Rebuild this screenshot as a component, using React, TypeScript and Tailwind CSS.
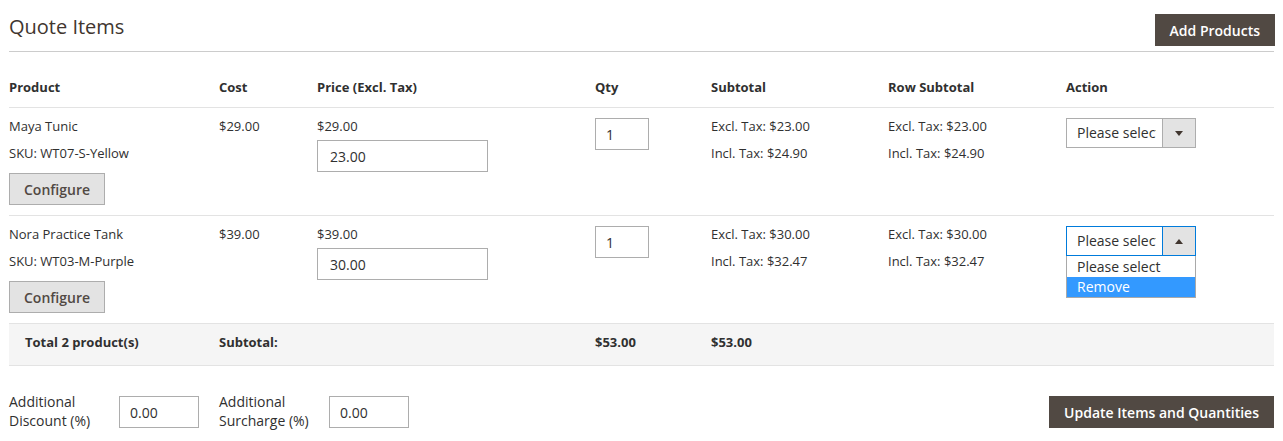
import React from 'react';

type Item = {
  name: string;
  sku: string;
  cost: string;
  price: string;
  customPrice: string;
  excl: string;
  incl: string;
  open?: boolean;
};

const items: Item[] = [
  { name: 'Maya Tunic', sku: 'WT07-S-Yellow', cost: '$29.00', price: '$29.00', customPrice: '23.00', excl: '$23.00', incl: '$24.90' },
  { name: 'Nora Practice Tank', sku: 'WT03-M-Purple', cost: '$39.00', price: '$39.00', customPrice: '30.00', excl: '$30.00', incl: '$32.47', open: true },
];

const cols = 'grid grid-cols-[210px_98px_278px_116px_177px_178px_208px]';

const ActionSelect: React.FC<{ open?: boolean }> = ({ open }) => (
  <div className="relative mt-[1px] w-[130px]">
    <div
      className={`flex h-[30px] border bg-white ${open ? 'border-[#007bdb]' : 'border-[#adadad]'}`}
    >
      <span className="mr-[6px] flex-1 overflow-hidden whitespace-nowrap pl-[10px] text-[14px] leading-[28px]">Please select</span>
      <span
        className={`flex w-[33px] items-center justify-center border-l bg-[#e3e3e3] ${open ? 'border-[#007bdb]' : 'border-[#adadad]'}`}
      >
        <svg width="8" height="5" viewBox="0 0 8 5">
          {open ? <path d="M0 5 L4 0 L8 5 Z" fill="#41362f" /> : <path d="M0 0 L8 0 L4 5 Z" fill="#41362f" />}
        </svg>
      </span>
    </div>
    {open && (
      <div className="absolute left-0 top-[30px] z-10 w-[130px] border border-t-0 border-[#a9a9a9] bg-white text-[14px] leading-[20px]">
        <div className="pl-[10px] pt-[1px]">Please select</div>
        <div className="bg-[#3399ff] pl-[10px] text-white">Remove</div>
      </div>
    )}
  </div>
);

const Row: React.FC<{ item: Item }> = ({ item }) => (
  <div className={`${cols} border-b border-[#e3e3e3] pt-[9px] pb-[10px]`}>
    <div>
      <div className="leading-[18px]">{item.name}</div>
      <div className="mt-[9px] leading-[18px]">SKU: {item.sku}</div>
      <button className="mt-[11px] h-[32px] w-[96px] border border-[#adadad] bg-[#e3e3e3] text-[14px] font-semibold text-[#514943]">
        Configure
      </button>
    </div>
    <div className="leading-[18px]">{item.cost}</div>
    <div>
      <div className="leading-[18px]">{item.price}</div>
      <input
        readOnly
        value={item.customPrice}
        className="mt-[5px] h-[32px] w-[171px] border border-[#adadad] px-[12px] text-[14px] outline-none"
      />
    </div>
    <div>
      <input
        readOnly
        value="1"
        className="mt-[1px] h-[32px] w-[54px] border border-[#adadad] px-[10px] text-[14px] outline-none"
      />
    </div>
    <div>
      <div className="leading-[18px]">Excl. Tax: {item.excl}</div>
      <div className="mt-[9px] leading-[18px]">Incl. Tax: {item.incl}</div>
    </div>
    <div>
      <div className="leading-[18px]">Excl. Tax: {item.excl}</div>
      <div className="mt-[9px] leading-[18px]">Incl. Tax: {item.incl}</div>
    </div>
    <div>
      <ActionSelect open={item.open} />
    </div>
  </div>
);

export default function App() {
  return (
    <div className="min-h-[441px] bg-white px-[9px] font-['Open_Sans',sans-serif] text-[13px] text-[#303030]">
      {/* Section title */}
      <div className="flex items-center justify-between border-b border-[#cccccc] pt-[14px] pb-[5px]">
        <h2 className="-mt-[7px] text-[20px] font-normal leading-[24px] text-[#41362f]">Quote Items</h2>
        <button className="mr-[-1px] h-[32px] bg-[#514943] px-[15px] text-[14px] font-semibold text-white">
          Add Products
        </button>
      </div>

      {/* Header */}
      <div className={`${cols} mt-[25px] border-b border-[#e3e3e3] pb-[10px] font-bold`}>
        <div className="leading-[20px]">Product</div>
        <div className="leading-[20px]">Cost</div>
        <div className="leading-[20px]">Price (Excl. Tax)</div>
        <div className="leading-[20px]">Qty</div>
        <div className="leading-[20px]">Subtotal</div>
        <div className="leading-[20px]">Row Subtotal</div>
        <div className="leading-[20px]">Action</div>
      </div>

      {items.map((item) => (
        <Row key={item.sku} item={item} />
      ))}

      {/* Totals */}
      <div className={`${cols} h-[42px] items-center border-b border-[#e3e3e3] bg-[#f5f5f5] pb-[4px] font-bold`}>
        <div className="pl-[16px]">Total 2 product(s)</div>
        <div className="col-span-2">Subtotal:</div>
        <div>$53.00</div>
        <div>$53.00</div>
        <div />
        <div />
      </div>

      {/* Adjustments */}
      <div className="mt-[30px] flex items-start justify-between">
        <div className="flex text-[14px]">
          <div className="-mt-[4px] w-[110px] leading-[19px]">
            Additional
            <br />
            Discount (%)
          </div>
          <input
            readOnly
            value="0.00"
            className="h-[32px] w-[80px] border border-[#adadad] px-[10px] text-[14px] outline-none"
          />
          <div className="-mt-[4px] ml-[20px] w-[110px] leading-[19px]">
            Additional
            <br />
            Surcharge (%)
          </div>
          <input
            readOnly
            value="0.00"
            className="h-[32px] w-[80px] border border-[#adadad] px-[10px] text-[14px] outline-none"
          />
        </div>
        <button className="h-[32px] bg-[#514943] px-[15px] text-[14px] font-semibold text-white">
          Update Items and Quantities
        </button>
      </div>
    </div>
  );
}
